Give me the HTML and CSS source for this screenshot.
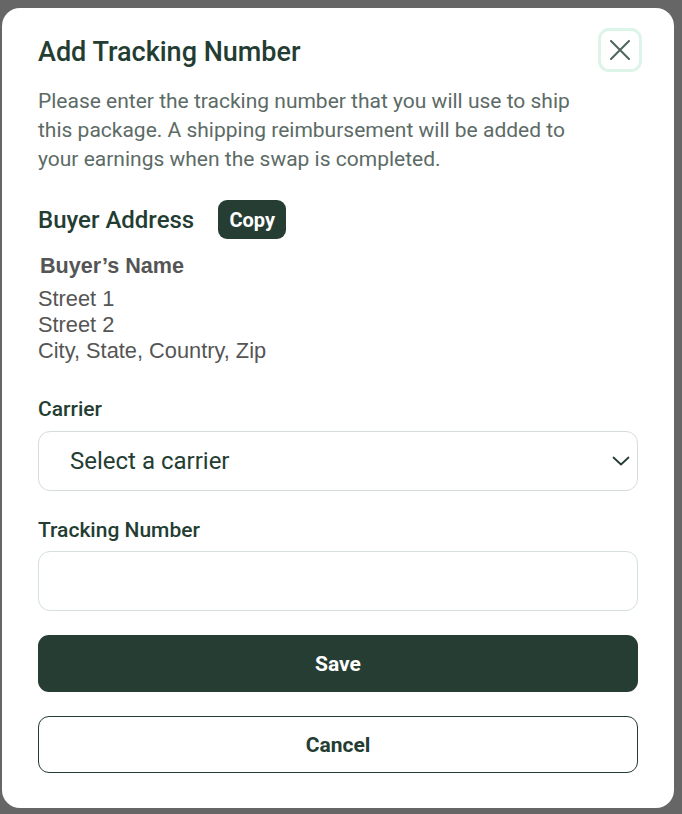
FILE: index.html
```html
<!DOCTYPE html>
<html lang="en">
<head>
<meta charset="utf-8">
<title>Add Tracking Number</title>
<link rel="stylesheet" href="styles.css">
</head>
<body>
<div class="backdrop">
  <div class="modal">
    <div class="modal-header">
      <h1 class="modal-title">Add Tracking Number</h1>
      <button class="close-btn" aria-label="Close">
        <svg width="20" height="20" viewBox="0 0 20 20"><path d="M1 1 L19 19 M19 1 L1 19" stroke="#4f6660" stroke-width="2" stroke-linecap="round" fill="none"/></svg>
      </button>
    </div>
    <p class="intro">Please enter the tracking number that you will use to ship this package. A shipping reimbursement will be added to your earnings when the swap is completed.</p>

    <div class="address-head">
      <h2 class="section-title">Buyer Address</h2>
      <button class="copy-btn">Copy</button>
    </div>
    <div class="address">
      <div class="buyer-name">Buyer’s Name</div>
      <div class="addr-line">Street 1</div>
      <div class="addr-line">Street 2</div>
      <div class="addr-line">City, State, Country, Zip</div>
    </div>

    <label class="field-label label-carrier">Carrier</label>
    <div class="select-box">
      <span class="select-text">Select a carrier</span>
      <svg class="chevron" width="18" height="10" viewBox="0 0 18 10"><path d="M1.5 1.5 L9 8.5 L16.5 1.5" stroke="#263d33" stroke-width="1.8" stroke-linecap="round" stroke-linejoin="round" fill="none"/></svg>
    </div>

    <label class="field-label label-tracking">Tracking Number</label>
    <div class="text-input"></div>

    <button class="btn btn-primary">Save</button>
    <button class="btn btn-secondary">Cancel</button>
  </div>
</div>
</body>
</html>
```
FILE: styles.css
```css
* { box-sizing: border-box; }
html, body { margin: 0; padding: 0; }
body {
  background: #666666;
  width: 682px;
  height: 814px;
  overflow: hidden;
  font-family: Roboto, "Liberation Sans", sans-serif;
}
.backdrop {
  padding: 8px 8px 6px 2px;
}
.modal {
  width: 672px;
  height: 800px;
  background: #ffffff;
  border-radius: 18px;
  padding: 20px 36px 0 36px;
  display: flex;
  flex-direction: column;
}
.modal-header {
  display: flex;
  align-items: center;
  justify-content: space-between;
  height: 44px;
  margin-right: -4px;
}
.modal-title {
  margin: 0;
  font-size: 27px;
  font-weight: 500;
  color: #243d33;
  line-height: 30px;
  padding-top: 4px;
}
.close-btn {
  width: 44px;
  height: 44px;
  border: 3px solid #dcf5e8;
  border-radius: 11px;
  background: #fff;
  display: flex;
  align-items: center;
  justify-content: center;
  padding: 0;
}
.intro {
  margin: 15px 0 0 0;
  font-size: 21px;
  line-height: 29px;
  color: #5c6b66;
  width: 545px;
}
.address-head {
  display: flex;
  align-items: center;
  margin-top: 26px;
}
.section-title {
  margin: 0;
  font-size: 24px;
  font-weight: 500;
  color: #243d33;
}
.copy-btn {
  margin-left: 24px;
  height: 39px;
  width: 68px;
  border: none;
  border-radius: 9px;
  background: #263d33;
  color: #ffffff;
  font-family: Roboto, "Liberation Sans", sans-serif;
  font-size: 20px;
  font-weight: 700;
  padding: 0;
}
.address {
  margin-top: 14px;
  font-family: "Liberation Sans", Arial, sans-serif;
  color: #555555;
}
.buyer-name {
  font-size: 21.6px;
  font-weight: 700;
  line-height: 26px;
  margin-bottom: 7px;
  padding-left: 2px;
}
.addr-line {
  font-size: 21.8px;
  line-height: 26px;
}
.field-label {
  display: block;
  font-size: 21px;
  font-weight: 500;
  line-height: 24px;
  color: #243d33;
}
.label-carrier { margin-top: 33px; }
.label-tracking { margin-top: 27px; }
.select-box {
  margin-top: 10px;
  height: 60px;
  border: 1px solid #d6dcda;
  border-radius: 12px;
  display: flex;
  align-items: center;
  justify-content: space-between;
  padding: 0 7px 0 31px;
}
.select-text {
  font-size: 24px;
  color: #243d33;
}
.text-input {
  margin-top: 9px;
  height: 60px;
  border: 1px solid #d4e0dc;
  border-radius: 12px;
}
.btn {
  height: 57px;
  border-radius: 11px;
  font-family: Roboto, "Liberation Sans", sans-serif;
  font-size: 21px;
  font-weight: 700;
  padding: 0;
  width: 600px;
}
.btn-primary {
  margin-top: 24px;
  background: #263d33;
  color: #ffffff;
  border: none;
}
.btn-secondary {
  margin-top: 24px;
  background: #ffffff;
  color: #243d33;
  border: 1px solid #243d33;
}
```
